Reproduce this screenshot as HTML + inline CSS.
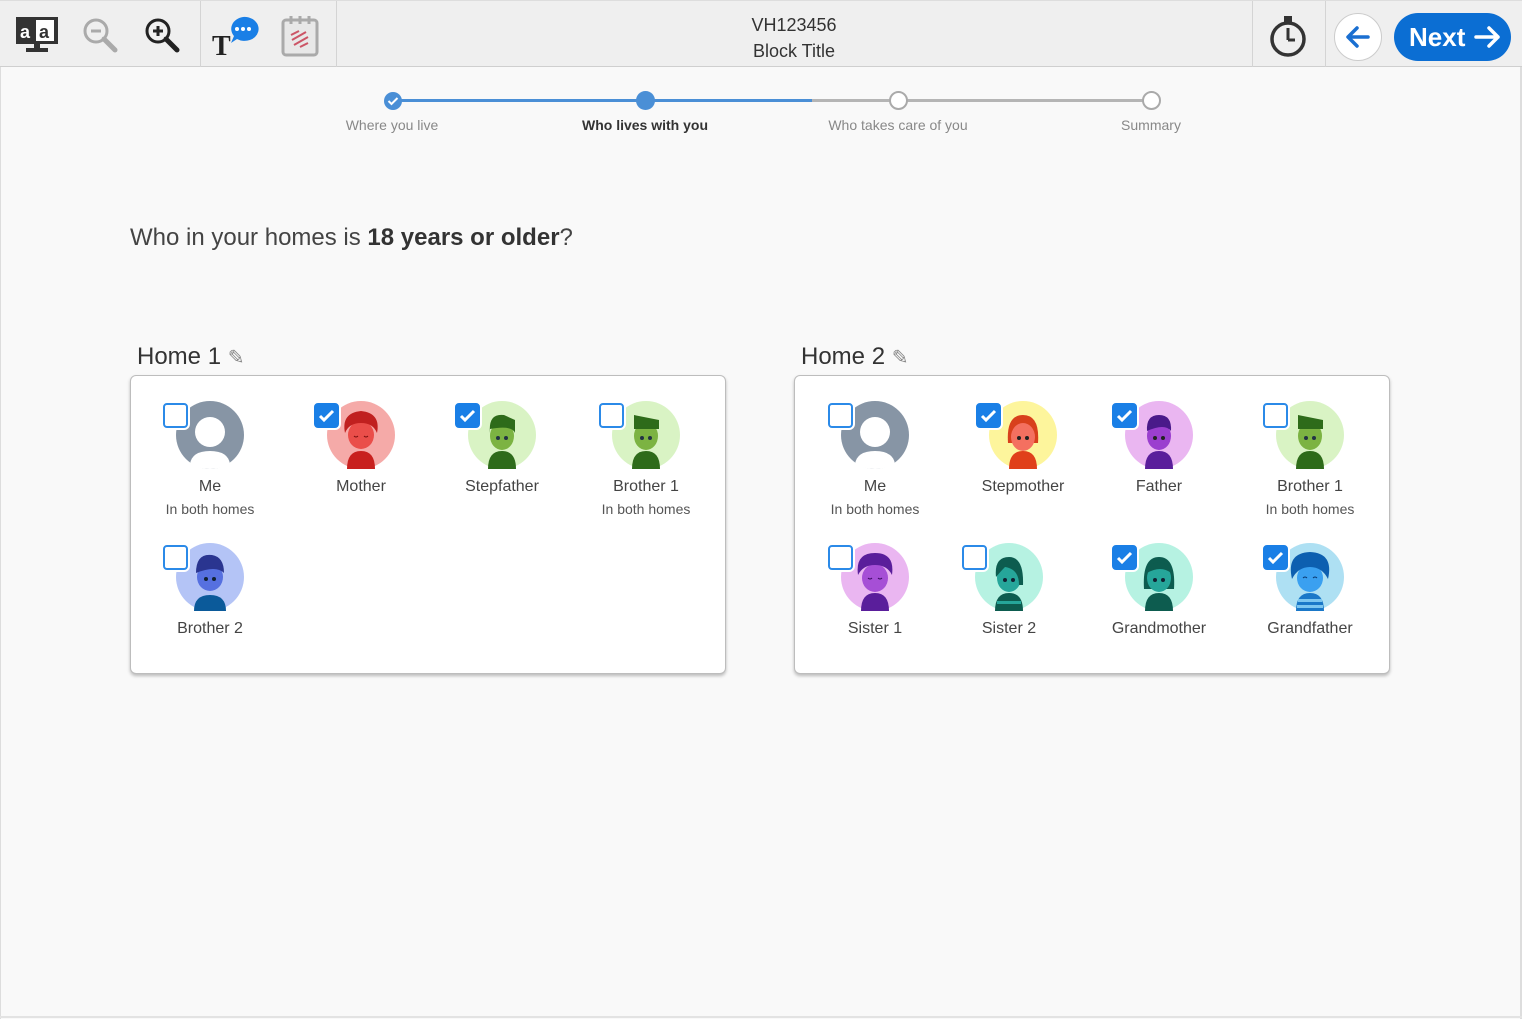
<!DOCTYPE html>
<html><head><meta charset="utf-8">
<style>
*{margin:0;padding:0;box-sizing:border-box}
body{width:1522px;height:1019px;background:#f9f9f9;font-family:"Liberation Sans",sans-serif;position:relative;overflow:hidden;color:#444}
.hdr{position:absolute;left:0;top:0;width:1522px;height:67px;background:#efefef;border-bottom:1px solid #cfcfcf;border-top:1px solid #ddd}
.sep{position:absolute;top:0;width:1px;height:66px;background:#d4d4d4}
.abs{position:absolute}
.card{position:absolute;background:#fff;border:1px solid #bdbdbd;border-radius:6px;box-shadow:0 2px 3px rgba(0,0,0,.25)}
.p{position:absolute;width:150px;text-align:center}
.p svg{display:block;margin:0 auto}
.p .n{font-size:16px;color:#444;margin-top:8px;line-height:20px}
.p .s{font-size:14px;color:#555;line-height:20px;margin-top:2px}
.cb{position:absolute;top:2px;left:28px;width:25px;height:25px;border:2px solid #2b8ae8;border-radius:4px;background:#fff;box-shadow:0 0 0 2px #fff}
.cb.on{background:#1a7fe6;border-color:#1a7fe6}
.lbl{position:absolute;top:117px;font-size:14px;color:#888;width:200px;text-align:center}
</style></head><body>
<div class="hdr">
  <div class="sep" style="left:200px"></div><div class="sep" style="left:336px"></div>
  <div class="sep" style="left:1252px"></div><div class="sep" style="left:1325px"></div>
  <svg class="abs" style="left:16px;top:16px" width="42" height="36" viewBox="0 0 42 36"><rect x="0" y="0" width="42" height="27" fill="#333"/><rect x="20" y="3" width="18" height="21" fill="#fff"/><text x="4" y="21" font-size="18" font-family="Liberation Sans" fill="#fff" font-weight="bold">a</text><text x="23" y="21" font-size="18" font-family="Liberation Sans" fill="#333" font-weight="bold">a</text><rect x="18" y="27" width="6" height="5" fill="#333"/><rect x="10" y="31" width="22" height="4" fill="#333"/></svg>
  <svg class="abs" style="left:82px;top:16px" width="36" height="36" viewBox="0 0 36 36"><circle cx="14" cy="14" r="11" fill="none" stroke="#aaa" stroke-width="3"/><line x1="9" y1="14" x2="19" y2="14" stroke="#aaa" stroke-width="3"/><line x1="22" y1="22" x2="33" y2="33" stroke="#aaa" stroke-width="5" stroke-linecap="round"/></svg>
  <svg class="abs" style="left:144px;top:16px" width="36" height="36" viewBox="0 0 36 36"><circle cx="14" cy="14" r="11" fill="none" stroke="#222" stroke-width="3"/><line x1="9" y1="14" x2="19" y2="14" stroke="#222" stroke-width="3"/><line x1="14" y1="9" x2="14" y2="19" stroke="#222" stroke-width="3"/><line x1="22" y1="22" x2="33" y2="33" stroke="#222" stroke-width="5" stroke-linecap="round"/></svg>
  <svg class="abs" style="left:212px;top:14px" width="48" height="42" viewBox="0 0 48 42"><text x="0" y="40" font-size="28" font-family="Liberation Serif" font-weight="bold" fill="#222">T</text><path d="M31 2a14 12 0 1 1 -6 22l-6 4 3-7a14 12 0 0 1 9-19z" fill="#1a7fe6"/><circle cx="25" cy="14" r="2" fill="#fff"/><circle cx="31" cy="14" r="2" fill="#fff"/><circle cx="37" cy="14" r="2" fill="#fff"/></svg>
  <svg class="abs" style="left:280px;top:14px" width="40" height="42" viewBox="0 0 40 42"><rect x="3" y="5" width="34" height="35" rx="3" fill="#e8e8e8" stroke="#aaa" stroke-width="3"/><line x1="11" y1="1" x2="11" y2="9" stroke="#aaa" stroke-width="3"/><line x1="20" y1="1" x2="20" y2="9" stroke="#aaa" stroke-width="3"/><line x1="29" y1="1" x2="29" y2="9" stroke="#aaa" stroke-width="3"/><path d="M11 20l8-4M12 25l14-8M14 30l14-8M20 32l8-4" stroke="#c56" stroke-width="2"/></svg>
  <div class="abs" style="left:700px;top:11px;width:188px;text-align:center;font-size:18px;line-height:26px;color:#333">VH123456<br>Block Title</div>
  <svg class="abs" style="left:1268px;top:13px" width="40" height="44" viewBox="0 0 40 44"><circle cx="20" cy="25" r="16" fill="none" stroke="#333" stroke-width="3.5"/><rect x="16" y="2" width="8" height="6" fill="#333"/><line x1="20" y1="14" x2="20" y2="26" stroke="#333" stroke-width="3"/><line x1="20" y1="26" x2="27" y2="26" stroke="#333" stroke-width="3"/></svg>
  <div class="abs" style="left:1334px;top:12px;width:48px;height:48px;border-radius:50%;background:#fff;border:1px solid #ccc"></div>
  <svg class="abs" style="left:1344px;top:22px" width="28" height="28" viewBox="0 0 28 28"><path d="M24 14H5M13 5l-9 9 9 9" fill="none" stroke="#1a6fd1" stroke-width="3.5" stroke-linecap="round" stroke-linejoin="round"/></svg>
  <div class="abs" style="left:1394px;top:12px;width:117px;height:48px;border-radius:24px;background:#0b6ed3"></div>
  <div class="abs" style="left:1409px;top:20px;font-size:26px;font-weight:bold;color:#fff;line-height:32px">Next</div>
  <svg class="abs" style="left:1473px;top:22px" width="30" height="28" viewBox="0 0 30 28"><path d="M3 14h22M16 5l9 9-9 9" fill="none" stroke="#fff" stroke-width="3.5" stroke-linecap="round" stroke-linejoin="round"/></svg>
</div>
<div class="abs" style="left:1520px;top:67px;width:2px;height:952px;background:#ddd"></div>
<div class="abs" style="left:0;top:67px;width:1px;height:952px;background:#ddd"></div>
<div class="abs" style="left:0;top:1016px;width:1522px;height:2px;background:#e3e3e3"></div>

<div class="abs" style="left:392px;top:99px;width:420px;height:3px;background:#4a8fd6"></div>
<div class="abs" style="left:812px;top:99px;width:340px;height:3px;background:#b5b5b5"></div>
<svg class="abs" style="left:383px;top:91px" width="20" height="20"><circle cx="10" cy="10" r="9" fill="#4a8fd6"/><path d="M5.5 10l3 3 6-6" stroke="#fff" stroke-width="2" fill="none"/></svg>
<div class="abs" style="left:636px;top:91px;width:19px;height:19px;border-radius:50%;background:#4a8fd6"></div>
<div class="abs" style="left:889px;top:91px;width:19px;height:19px;border-radius:50%;background:#fff;border:2px solid #aaa"></div>
<div class="abs" style="left:1142px;top:91px;width:19px;height:19px;border-radius:50%;background:#fff;border:2px solid #aaa"></div>
<div class="lbl" style="left:292px">Where you live</div>
<div class="lbl" style="left:545px;color:#333;font-weight:bold">Who lives with you</div>
<div class="lbl" style="left:798px">Who takes care of you</div>
<div class="lbl" style="left:1051px">Summary</div>

<div class="abs" style="left:130px;top:224px;font-size:24px;color:#444">Who in your homes is <b style="color:#333">18 years or older</b>?</div>

<div class="abs" style="left:137px;top:343px;font-size:24px;color:#333">Home 1 <span style="color:#888;font-size:20px">&#9998;</span></div>
<div class="abs" style="left:801px;top:343px;font-size:24px;color:#333">Home 2 <span style="color:#888;font-size:20px">&#9998;</span></div>
<div class="card" style="left:130px;top:375px;width:596px;height:299px"></div>
<div class="card" style="left:794px;top:375px;width:596px;height:299px"></div>

<div class="p" style="left:135px;top:401px"><svg width="68" height="68" viewBox="0 0 68 68"><circle cx="34" cy="34" r="34" fill="#8795a5"/><circle cx="34" cy="31" r="15" fill="#fff"/><path d="M14 63Q16 50 34 50Q52 50 54 63Q44 68 34 68Q24 68 14 63Z" fill="#fff"/></svg><div class="n">Me</div><div class="s">In both homes</div><div class="cb"></div></div>

<div class="p" style="left:286px;top:401px"><svg width="68" height="68" viewBox="0 0 68 68"><circle cx="34" cy="34" r="34" fill="#f5aaa8"/><path d="M20 68Q20 50 34 50Q48 50 48 68Z" fill="#c8201e"/><ellipse cx="34" cy="34" rx="13" ry="14" fill="#ea4e4a"/><path d="M18 32Q14 12 34 10Q54 12 50 32Q46 22 34 22Q22 22 18 32Z" fill="#c0201f"/><path d="M27 35q2 2 4 0M37 35q2 2 4 0" stroke="#7a1010" fill="none"/></svg><div class="n">Mother</div><div class="cb on"><svg width="21" height="21" viewBox="0 0 21 21"><path d="M4 11l4 4 9-9" stroke="#fff" stroke-width="3" fill="none"/></svg></div></div>

<div class="p" style="left:427px;top:401px"><svg width="68" height="68" viewBox="0 0 68 68"><circle cx="34" cy="34" r="34" fill="#d9f3c4"/><path d="M20 68Q20 50 34 50Q48 50 48 68Z" fill="#2e6b1a"/><ellipse cx="34" cy="35" rx="12" ry="14" fill="#7cb342"/><path d="M22 32Q20 12 36 14L47 19L47 32Q44 24 22 28Z" fill="#2e6b1a"/><circle cx="30" cy="37" r="2" fill="#234"/><circle cx="38" cy="37" r="2" fill="#234"/></svg><div class="n">Stepfather</div><div class="cb on"><svg width="21" height="21" viewBox="0 0 21 21"><path d="M4 11l4 4 9-9" stroke="#fff" stroke-width="3" fill="none"/></svg></div></div>

<div class="p" style="left:571px;top:401px"><svg width="68" height="68" viewBox="0 0 68 68"><circle cx="34" cy="34" r="34" fill="#d9f3c4"/><path d="M20 68Q20 50 34 50Q48 50 48 68Z" fill="#2e6b1a"/><ellipse cx="34" cy="35" rx="12" ry="14" fill="#7cb342"/><path d="M22 28L22 14L47 19L47 28Z" fill="#2e6b1a"/><circle cx="30" cy="37" r="2" fill="#234"/><circle cx="38" cy="37" r="2" fill="#234"/></svg><div class="n">Brother 1</div><div class="s">In both homes</div><div class="cb"></div></div>

<div class="p" style="left:135px;top:543px"><svg width="68" height="68" viewBox="0 0 68 68"><circle cx="34" cy="34" r="34" fill="#b4c4f6"/><path d="M18 68Q18 52 34 52Q50 52 50 68Z" fill="#0b5a9a"/><ellipse cx="34" cy="34" rx="13" ry="14" fill="#5670e0"/><path d="M20 30Q20 10 36 12Q48 14 48 30Q40 22 20 30Z" fill="#2a3590"/><circle cx="30" cy="36" r="2" fill="#123"/><circle cx="38" cy="36" r="2" fill="#123"/></svg><div class="n">Brother 2</div><div class="cb"></div></div>

<div class="p" style="left:800px;top:401px"><svg width="68" height="68" viewBox="0 0 68 68"><circle cx="34" cy="34" r="34" fill="#8795a5"/><circle cx="34" cy="31" r="15" fill="#fff"/><path d="M14 63Q16 50 34 50Q52 50 54 63Q44 68 34 68Q24 68 14 63Z" fill="#fff"/></svg><div class="n">Me</div><div class="s">In both homes</div><div class="cb"></div></div>

<div class="p" style="left:948px;top:401px"><svg width="68" height="68" viewBox="0 0 68 68"><circle cx="34" cy="34" r="34" fill="#fdf59c"/><path d="M20 68Q20 50 34 50Q48 50 48 68Z" fill="#e0401a"/><path d="M19 42Q17 14 34 14Q51 14 49 42Z" fill="#d8401c"/><ellipse cx="34" cy="36" rx="12" ry="14" fill="#f47060"/><circle cx="30" cy="37" r="2" fill="#222"/><circle cx="38" cy="37" r="2" fill="#222"/></svg><div class="n">Stepmother</div><div class="cb on"><svg width="21" height="21" viewBox="0 0 21 21"><path d="M4 11l4 4 9-9" stroke="#fff" stroke-width="3" fill="none"/></svg></div></div>

<div class="p" style="left:1084px;top:401px"><svg width="68" height="68" viewBox="0 0 68 68"><circle cx="34" cy="34" r="34" fill="#eab6f1"/><path d="M20 68Q20 50 34 50Q48 50 48 68Z" fill="#5a1e9b"/><ellipse cx="34" cy="35" rx="12" ry="14" fill="#9b3fcf"/><path d="M22 30Q21 14 34 14Q47 14 46 30Q40 22 22 30Z" fill="#4a1a8a"/><circle cx="30" cy="37" r="2" fill="#222"/><circle cx="38" cy="37" r="2" fill="#222"/></svg><div class="n">Father</div><div class="cb on"><svg width="21" height="21" viewBox="0 0 21 21"><path d="M4 11l4 4 9-9" stroke="#fff" stroke-width="3" fill="none"/></svg></div></div>

<div class="p" style="left:1235px;top:401px"><svg width="68" height="68" viewBox="0 0 68 68"><circle cx="34" cy="34" r="34" fill="#d9f3c4"/><path d="M20 68Q20 50 34 50Q48 50 48 68Z" fill="#2e6b1a"/><ellipse cx="34" cy="35" rx="12" ry="14" fill="#7cb342"/><path d="M22 28L22 14L47 19L47 28Z" fill="#2e6b1a"/><circle cx="30" cy="37" r="2" fill="#234"/><circle cx="38" cy="37" r="2" fill="#234"/></svg><div class="n">Brother 1</div><div class="s">In both homes</div><div class="cb"></div></div>

<div class="p" style="left:800px;top:543px"><svg width="68" height="68" viewBox="0 0 68 68"><circle cx="34" cy="34" r="34" fill="#eab6f1"/><path d="M20 68Q20 50 34 50Q48 50 48 68Z" fill="#5a1e9b"/><ellipse cx="34" cy="35" rx="13" ry="14" fill="#a64fd6"/><path d="M17 32Q14 10 34 10Q54 10 51 32Q46 22 34 22Q22 22 17 32Z" fill="#5a1e9b"/><path d="M27 35q2 2 4 0M37 35q2 2 4 0" stroke="#3a0a60" fill="none"/></svg><div class="n">Sister 1</div><div class="cb"></div></div>

<div class="p" style="left:934px;top:543px"><svg width="68" height="68" viewBox="0 0 68 68"><circle cx="34" cy="34" r="34" fill="#b6f2e2"/><path d="M20 68Q20 50 34 50Q48 50 48 68Z" fill="#0d5c4f"/><rect x="22" y="58" width="24" height="3" fill="#26a69a"/><ellipse cx="34" cy="35" rx="12" ry="14" fill="#26a69a"/><path d="M21 34Q19 14 34 14Q49 14 48 42L44 42Q44 26 30 24Q26 28 21 34Z" fill="#0d5c4f"/><circle cx="30" cy="37" r="2" fill="#123"/><circle cx="38" cy="37" r="2" fill="#123"/></svg><div class="n">Sister 2</div><div class="cb"></div></div>

<div class="p" style="left:1084px;top:543px"><svg width="68" height="68" viewBox="0 0 68 68"><circle cx="34" cy="34" r="34" fill="#b6f2e2"/><path d="M20 68Q20 50 34 50Q48 50 48 68Z" fill="#0d5c4f"/><path d="M19 46Q17 14 34 14Q51 14 49 46Z" fill="#0d5c4f"/><ellipse cx="34" cy="35" rx="12" ry="14" fill="#26a69a"/><path d="M22 30Q26 19 34 19Q42 19 46 30Q36 22 22 30Z" fill="#0d5c4f"/><circle cx="30" cy="37" r="2" fill="#123"/><circle cx="38" cy="37" r="2" fill="#123"/></svg><div class="n">Grandmother</div><div class="cb on"><svg width="21" height="21" viewBox="0 0 21 21"><path d="M4 11l4 4 9-9" stroke="#fff" stroke-width="3" fill="none"/></svg></div></div>

<div class="p" style="left:1235px;top:543px"><svg width="68" height="68" viewBox="0 0 68 68"><circle cx="34" cy="34" r="34" fill="#aee0f3"/><path d="M20 68Q20 50 34 50Q48 50 48 68Z" fill="#1a78c8"/><rect x="22" y="56" width="24" height="3" fill="#7cc6f0"/><rect x="21" y="62" width="26" height="3" fill="#7cc6f0"/><ellipse cx="34" cy="35" rx="13" ry="14" fill="#3aa0f0"/><path d="M16 36Q10 10 34 9Q58 10 52 36Q46 24 34 24Q22 24 16 36Z" fill="#0d5fb0"/><path d="M27 35q2 -2 4 0M37 35q2 -2 4 0" stroke="#0a3a70" fill="none"/></svg><div class="n">Grandfather</div><div class="cb on"><svg width="21" height="21" viewBox="0 0 21 21"><path d="M4 11l4 4 9-9" stroke="#fff" stroke-width="3" fill="none"/></svg></div></div>
</body></html>
